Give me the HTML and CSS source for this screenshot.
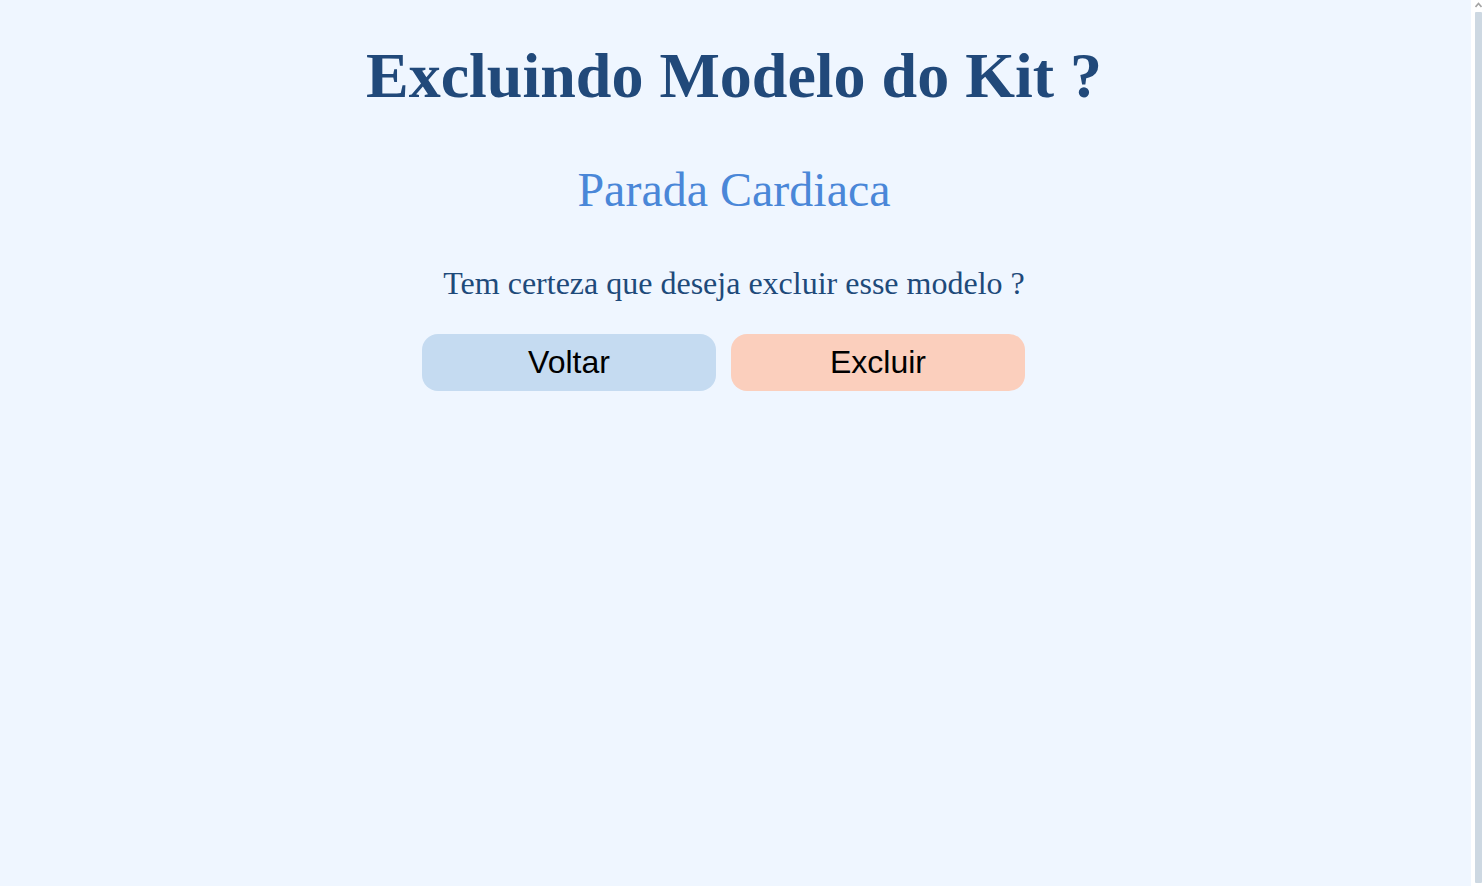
FILE: index.html
```html
<!DOCTYPE html>
<html lang="pt-BR">
<head>
<meta charset="utf-8">
<title>Excluindo Modelo do Kit</title>
<link rel="stylesheet" href="styles.css">
</head>
<body>
<main class="page">
  <h1 class="title">Excluindo Modelo do Kit ?</h1>
  <h2 class="model">Parada Cardiaca</h2>
  <p class="question">Tem certeza que deseja excluir esse modelo ?</p>
  <div class="actions">
    <button class="btn btn-back" type="button">Voltar</button>
    <button class="btn btn-delete" type="button">Excluir</button>
  </div>
</main>
<div class="scrollbar" aria-hidden="true">
  <svg class="scroll-arrow" width="7" height="6" viewBox="0 0 7 6"><path d="M0.5 5 L3.5 1.5 L6.5 5" fill="none" stroke="#a3a3a3" stroke-width="1.6"/></svg>
  <div class="scroll-thumb"></div>
</div>
</body>
</html>
```
FILE: styles.css
```css
html,
body {
  height: 100%;
}
body {
  margin: 0;
  display: flex;
  overflow: hidden;
  background: #eff6ff;
  font-family: "Liberation Serif", "Times New Roman", serif;
}
.page {
  flex: 1;
  display: flex;
  flex-direction: column;
  align-items: center;
  padding-top: 36px;
  padding-right: 3px;
}
.title {
  margin: 0;
  font-size: 64px;
  font-weight: bold;
  color: #21497a;
  line-height: 80px;
}
.model {
  margin: 46px 0 0;
  font-size: 48px;
  font-weight: normal;
  color: #4a87d8;
  line-height: 56px;
}
.question {
  margin: 47px 0 0;
  font-size: 32px;
  color: #1e4a7a;
  line-height: 36px;
}
.actions {
  display: flex;
  gap: 15px;
  margin-top: 33px;
  padding-right: 21px;
}
.btn {
  width: 294px;
  height: 57px;
  border: none;
  border-radius: 16px;
  font-family: "Liberation Sans", Arial, sans-serif;
  font-size: 32px;
  color: #000;
  cursor: pointer;
}
.btn-back {
  background: #c5dbf1;
}
.btn-delete {
  background: #fbcfbd;
}
.scrollbar {
  width: 13px;
  flex-shrink: 0;
  background: #ffffff;
  display: flex;
  flex-direction: column;
  align-items: flex-start;
  padding: 2px 2px 3px 4px;
  box-sizing: border-box;
}
.scroll-arrow {
  display: block;
  margin-bottom: 4px;
}
.scroll-thumb {
  flex: 1;
  width: 7px;
  background: #cdd8e2;
  border-radius: 1px;
}
```
